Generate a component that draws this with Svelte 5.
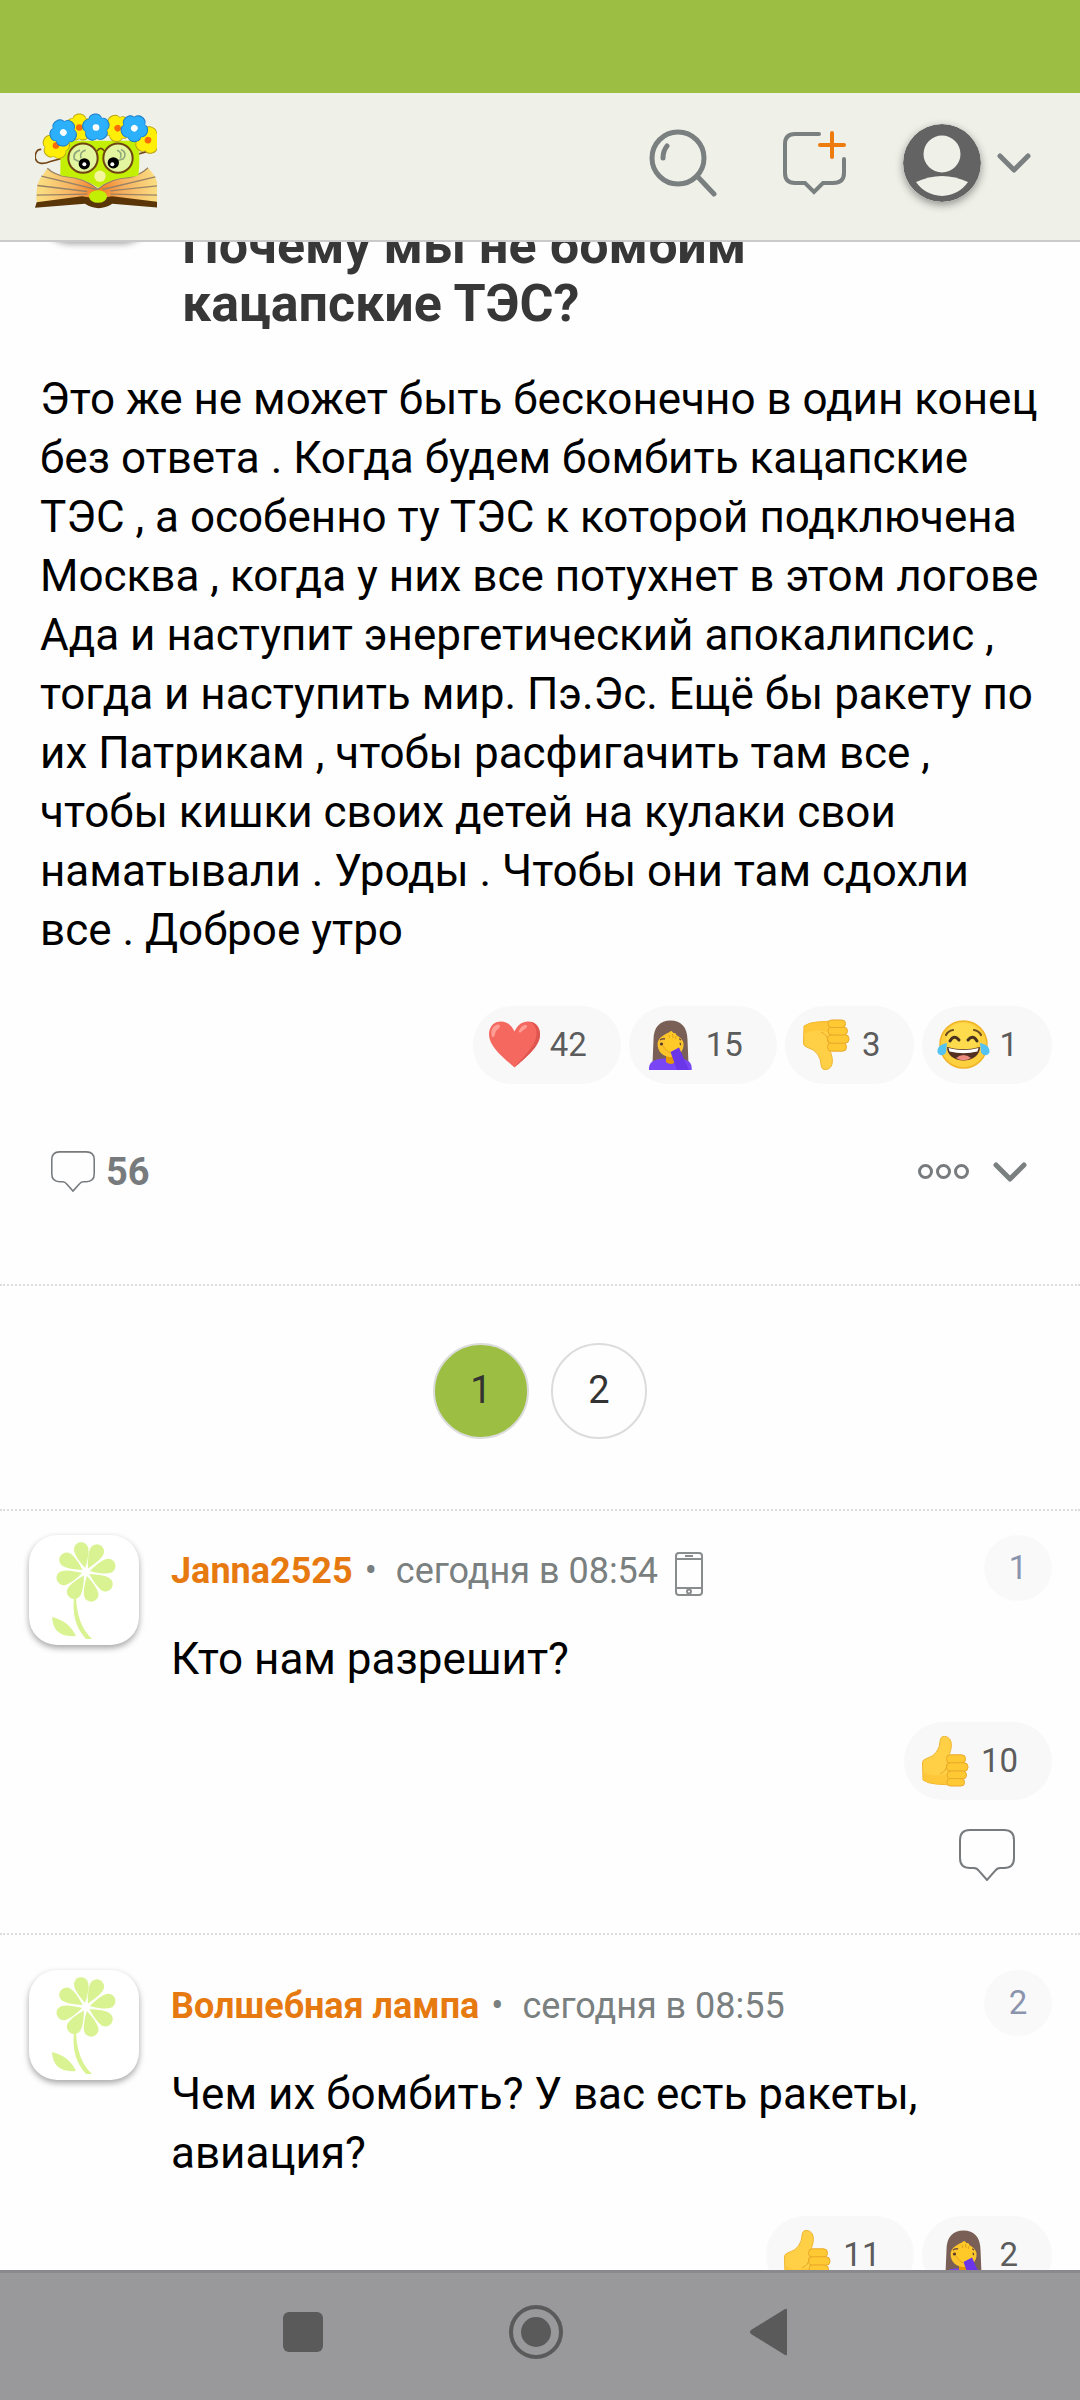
<script>
    const post = {
        title: 'Почему мы не бомбим кацапские ТЭС?',
        text: 'Это же не может быть бесконечно в один конец без ответа . Когда будем бомбить кацапские ТЭС , а особенно ту ТЭС к которой подключена Москва , когда у них все потухнет в этом логове Ада и наступит энергетический апокалипсис , тогда и наступить мир. Пэ.Эс. Ещё бы ракету по их Патрикам , чтобы расфигачить там все , чтобы кишки своих детей на кулаки свои наматывали . Уроды . Чтобы они там сдохли все . Доброе утро',
        comments: 56,
        reactions: [['heart', 42], ['facepalm', 15], ['down', 3], ['joy', 1]]
    };

    const comments = [
        { user: 'Janna2525', date: 'сегодня в 08:54', mobile: true, text: 'Кто нам разрешит?', reactions: [['up', 10]] },
        { user: 'Волшебная лампа', date: 'сегодня в 08:55', mobile: false, text: 'Чем их бомбить? У вас есть ракеты, авиация?', reactions: [['up', 11], ['facepalm', 2]] }
    ];

    let page = $state(1);

    const petals = [348, 28, 75, 122, 167, 211, 255, 302];

    // x, y, rotation, colour of every flower in the logo wreath
    const wreath = [
        [108, 138, 10, 'yellow'],
        [178, 84, 0, 'yellow'],
        [384, 122, 15, 'yellow'],
        [130, 99, 40, 'blue'],
        [293, 86, -25, 'yellow'],
        [228, 84, -5, 'blue'],
        [343, 86, 35, 'blue']
    ];
</script>

{#snippet emoji(name)}
    <svg class="emoji" viewBox="0 0 55 55" aria-hidden="true">
        {#if name == 'heart'}
            <path d="M27.500 49.500C18 41 2 29 2 16.500C2 8 7.500 3.500 14 3.500c6 0 10.500 3.500 13.500 10C30.500 7 35 3.500 41 3.500c6.500 0 12 4.500 12 13C53 29 37 41 27.500 49.500z" fill="#f4685f" />
            <path d="M43 3.700c5.800.8 10 5.400 10 12.800C53 29 37 41 27.500 49.500C36 39 49.500 28 49.500 15c0-5-2.300-9-6.500-11.300z" fill="#df5650" />
            <path d="M4.500 17c-1-5 2-10 6.500-10.500c3 0 2.500 3-.5 5c-3 2-2 7-4 7.500c-1 .2-1.700-.7-2-2zM32 13c1-3 4-6.500 7-6c2 .6 1 3-1.500 4.200c-2 1-3 3.300-4.500 3.300c-1 0-1.300-.6-1-1.500z" fill="#ff9d94" />
        {:else if name == 'facepalm'}
            <path d="M27.500 2.500C17 2.500 10.500 9 10.500 22L9.500 46h36l-1-24C44.500 9 38 2.500 27.500 2.500z" fill="#795f55" />
            <path d="M6 52v-2c0-6 6-9 14-9.500h16c8 .5 12.700 3.500 12.700 9.500v2z" fill="#7a46f5" />
            <path d="M23 36h9v8c-2 2.500-6 2.500-9 0z" fill="#e59600" />
            <path d="M28 13c-6 4-12 5-13.400 12C14 34 21 39 27.500 39S41.500 34 40.500 25C39 19 34 18 28 13z" fill="#fcc42c" />
            <path d="M17 22q2.500-2 5-1M33 21q3-1 5 1" stroke="#6d4c41" stroke-width="1.500" fill="none" />
            <circle cx="18.500" cy="26" r="1.600" fill="#543930" /><circle cx="36.500" cy="26" r="1.600" fill="#543930" />
            <path d="M22 24l2-7q1-2 2 0l1-3q1.500-1.500 2.500 0l.5 2q2-2 3 0l.5 3q2-1 2.500 1l1 8-5 6-7 1-4-5z" fill="#ffca28" />
            <path d="M26 17l.5 3M29.500 16l.5 4M33 18l-.5 3M20 28q3 5 7 7" stroke="#e3a11a" stroke-width="1" fill="none" />
            <path d="M27.500 34l8.500-4.500L46 52H34z" fill="#6b35e8" />
        {:else if name == 'joy'}
            <circle cx="27.500" cy="26.500" r="23.500" fill="#fcd03f" stroke="#f0b429" stroke-width="1.500" />
            <ellipse cx="27" cy="19" rx="17" ry="14" fill="#ffe052" opacity=".7" />
            <path d="M10 17q2-4 7-5M38 12q5 1 7 5" stroke="#6b4b20" stroke-width="2.200" fill="none" stroke-linecap="round" />
            <path d="M14 23q4-7 9-1M32 22q5-6 9 1" stroke="#49321d" stroke-width="3" fill="none" stroke-linecap="round" />
            <path d="M11 29q16.500 4.500 33 0C44 37 37 42.500 27.500 42.500S11 37 11 29z" fill="#533021" />
            <path d="M12.500 30q15 4 30 0l-1 3.500q-14 3.500-28 0z" fill="#fff" />
            <path d="M20 40q7.500-6 15 0q-7.500 4.500-15 0z" fill="#ef8a80" />
            <path d="M11 25C5 26 1 29 1.500 34c.5 4 7 4.500 8.500 0zM44 25c6 1 10 4 9.500 9c-.5 4-7 4.500-8.500 0z" fill="#55c3f2" />
        {:else}
            <g transform={name == 'down' ? 'matrix(1 0 0 -1 0 54)' : null}>
                <path d="M4.500 29q0-3 3-4q8-2.500 11-7q3.500-5 3.800-12c.2-5 7.700-4.500 10 0c2.200 4.500.7 10-1.300 15.500L33 51l-15-1q-8-.5-13-4z" fill="#ffd046" stroke="#eeb52f" stroke-width="1" />
                <path d="M5 38q10 6 24 2l2 11-13-1q-8-.5-13-4z" fill="#fcc130" opacity=".6" />
                <g fill="#ffc933" stroke="#e9a92a" stroke-width="1">
                    <rect x="28.500" y="20.800" width="19" height="8.500" rx="4" />
                    <rect x="28.500" y="28.800" width="21.500" height="8.500" rx="4" />
                    <rect x="29" y="37" width="19.500" height="8" rx="4" />
                    <rect x="29" y="44.500" width="17.500" height="7.500" rx="3.500" />
                </g>
                <path d="M29 30q0 7-7 10" stroke="#e9a92a" stroke-width="1" fill="none" />
            </g>
        {/if}
    </svg>
{/snippet}

{#snippet reactionList(items)}
    <div class="reactions">
        {#each items as [name, count]}
            <button class="reaction">{@render emoji(name)}<span>{count}</span></button>
        {/each}
    </div>
{/snippet}

{#snippet bubble()}
    <svg class="bubble" viewBox="0 0 56 52" aria-hidden="true">
        <path d="M11 1h34q10 0 10 10v18q0 10-10 10h-4q-3 0-5 3l-8 9-8-9q-2-3-5-3h-4Q1 39 1 29V11Q1 1 11 1z" />
    </svg>
{/snippet}

{#snippet chevron()}
    <svg class="chevron" viewBox="0 0 34 20" aria-hidden="true"><path d="M3 3l14 14L31 3" /></svg>
{/snippet}

<div class="screen">
    <div class="status"></div>

    <header>
        <a class="logo" href="#home" aria-label="Главная">
            <svg viewBox="45 38 366 290" aria-hidden="true">
                <defs>
                    <radialGradient id="pages" gradientUnits="userSpaceOnUse" cx="235" cy="268" r="170">
                        <stop offset="0" stop-color="#f47a1c" />
                        <stop offset=".45" stop-color="#f6b160" />
                        <stop offset="1" stop-color="#fadb80" />
                    </radialGradient>
                </defs>
                <path d="M64 150c-14-2-20 14-18 26c5 20 25 18 45 10L142 172M340 168l48-14" fill="none" stroke="#74471a" stroke-width="5" />
                <path d="M82 206q22 21 58 25q50 3 94 38q40-34 92-35q35-7 58-29q30 33 27 50v55l-135-6q-42 14-88 0L50 308q-4-60 16-78z" fill="url(#pages)" />
                <path d="M82 206q22 21 58 25q50 3 94 38q40-34 92-35q35-7 58-29M64 230l166 40M52 258l150 18M50 287l152-3M406 232l-158 38M411 259l-140 15M411 287l-140-3" fill="none" stroke="#988367" stroke-width="4" />
                <path d="M122 124L355 124q6 60 0 104q-12 4-30 5q-52 2-90 32q-42-30-94-34q-12-1-20-4z" fill="#c3ef05" />
                <path d="M50 308l136-18q46 9 90 0l135 17v17l-134-11q-41 26-82 0l-150 12z" fill="#593508" />
                <ellipse cx="234" cy="291" rx="27" ry="19" fill="#c3ef05" />
                <circle cx="189" cy="176" r="44" fill="#e4f5a0" stroke="#6d4412" stroke-width="6" />
                <circle cx="294" cy="176" r="44" fill="#e4f5a0" stroke="#6d4412" stroke-width="6" />
                <path d="M231 155q11-17 22 0" fill="none" stroke="#6d4412" stroke-width="5" />
                <path d="M180 152q-22 6-17 27l14 7M197 152q-20 6-14 24M303 150q20 10 7 28l-16 5M291 152q17 6 10 24" fill="none" stroke="#91a77c" stroke-width="5" />
                <circle cx="193" cy="193" r="17" /><circle cx="193" cy="194" r="6" fill="#fff" />
                <circle cx="280" cy="190" r="17" /><circle cx="277" cy="194" r="6" fill="#fff" />
                <circle cx="240" cy="230" r="17" fill="#f5f69c" />
                {#each wreath as [x, y, angle, color]}
                    <g class={color} transform="translate({x} {y}) rotate({angle})">
                        {#each [0, 72, 144, 216, 288] as turn}
                            <path class="under" transform="rotate({turn})" d="M0 4C-30-14-24-42 0-42S30-14 0 4z" />
                        {/each}
                        {#each [0, 72, 144, 216, 288] as turn}
                            <path class="petal" transform="rotate({turn})" d="M0 4C-29-13-22-39 0-39S29-13 0 4z" />
                        {/each}
                        <circle class="center" r="10" />
                    </g>
                {/each}
            </svg>
        </a>
        <nav class="tools">
            <button class="search" aria-label="Поиск">
                <svg viewBox="0 0 68 68" aria-hidden="true">
                    <circle cx="29" cy="29" r="26" />
                    <path d="M48 47l17 18M18 17q-4 5-4 12" />
                </svg>
            </button>
            <button class="new-topic" aria-label="Новая тема">
                <svg viewBox="0 0 64 64" aria-hidden="true">
                    <path d="M36 3H12Q2 3 2 13v29q0 10 10 10h10l9 9 9-9h10q11 0 11-10V28" />
                    <path class="plus" d="M49 2v24M37 14h24" />
                </svg>
            </button>
            <button class="account" aria-label="Профиль">
                <svg class="user" viewBox="0 0 78 78" aria-hidden="true">
                    <circle cx="39" cy="39" r="39" fill="#636363" />
                    <circle cx="39" cy="30" r="18.500" fill="#eff1e9" />
                    <path d="M13 58q26-12 52 0q-9 13-26 14q-17-1-26-14z" fill="#eff1e9" />
                </svg>
                {@render chevron()}
            </button>
        </nav>
    </header>

    <main>
        <article class="post">
            <div class="post-head">
                <div class="avatar"></div>
                <h1>{post.title}</h1>
            </div>
            <p class="text post-text">{post.text}</p>
            {@render reactionList(post.reactions)}
            <footer>
                <a class="count" href="#comments">{@render bubble()}{post.comments}</a>
                <button class="more" aria-label="Ещё">
                    <svg class="dots" viewBox="0 0 51 15" aria-hidden="true">
                        <circle cx="7.500" cy="7.500" r="6" /><circle cx="25.500" cy="7.500" r="6" /><circle cx="43.500" cy="7.500" r="6" />
                    </svg>
                    {@render chevron()}
                </button>
            </footer>
        </article>

        <nav class="pager">
            {#each [1, 2] as n}
                <button class:active={page == n} onclick={() => page = n}>{n}</button>
            {/each}
        </nav>

        <section id="comments">
            {#each comments as comment, i}
                <article class="comment">
                    <div class="avatar">
                        <svg viewBox="0 0 110 110" aria-hidden="true">
                            {#each petals as angle}
                                <path transform="translate(57 37) rotate({angle})" d="M0-4Q-7-16-7.300-23A7.300 7.300 0 0 1 7.300-23Q7-16 0-4z" />
                            {/each}
                            <path d="M45 62q-3 26 12 42h6Q48 90 47 62zM23 82q1 21 24 19q-7-15-24-19z" />
                        </svg>
                    </div>
                    <div class="content">
                        <div class="top">
                            <div class="meta">
                                <a href="#user">{comment.user}</a>
                                <span class="bullet">•</span>
                                <time>{comment.date}</time>
                                {#if comment.mobile}
                                    <svg class="phone" viewBox="0 0 28 44" aria-hidden="true">
                                        <rect x="1" y="1" width="26" height="42" rx="3" />
                                        <path d="M1 7h26M1 36h26M10 4h8" />
                                        <circle cx="14" cy="39.500" r="2" />
                                    </svg>
                                {/if}
                            </div>
                            <span class="number">{i + 1}</span>
                        </div>
                        <p class="text">{comment.text}</p>
                        {@render reactionList(comment.reactions)}
                        <button class="reply" aria-label="Ответить">{@render bubble()}</button>
                    </div>
                </article>
            {/each}
        </section>
    </main>

    <nav class="system">
        <button aria-label="Недавние"><svg viewBox="0 0 54 54"><rect x="7" y="7" width="40" height="40" rx="6" /></svg></button>
        <button aria-label="Домой"><svg viewBox="0 0 54 54"><circle class="ring" cx="27" cy="27" r="25" /><circle cx="27" cy="27" r="15" /></svg></button>
        <button aria-label="Назад"><svg viewBox="0 0 54 54"><path d="M9 25L43 4q2-1 2 1v44q0 2-2 1L9 29q-2-2 0-4z" /></svg></button>
    </nav>
</div>

<style>
    :global(body) {
        margin: 0;
        background: #fefefe;
    }

    .screen {
        display: flex;
        flex-direction: column;
        height: 100vh;
        overflow: hidden;
        font-family: Roboto, "Liberation Sans", sans-serif;
        color: #000;
    }

    button {
        padding: 0;
        border: none;
        background: none;
        font: inherit;
        color: inherit;
    }

    a {
        text-decoration: none;
    }

    svg {
        display: block;
    }

    .status {
        flex: none;
        height: 93px;
        background: #9cbf43;
    }

    header {
        flex: none;
        display: flex;
        align-items: center;
        justify-content: space-between;
        height: 147px;
        padding: 0 49px 0 35px;
        background: #eff1e9;
        border-bottom: 2px solid #c9cbca;
    }

    .logo svg {
        width: 122px;
        height: 97px;
        margin-bottom: 12px;
    }

    .yellow .under { fill: #b8a313; }
    .yellow .petal { fill: #ffee08; }
    .yellow .center { fill: #f96a08; }
    .blue .under { fill: #1d79c4; }
    .blue .petal { fill: #2cb0fc; }
    .blue .center { fill: #fff; }

    .tools {
        display: flex;
        align-items: center;
        padding-bottom: 8px;
    }

    .search svg, .new-topic svg {
        fill: none;
        stroke: #7a7f80;
        stroke-width: 5;
        stroke-linecap: round;
    }

    .search svg {
        width: 68px;
        height: 68px;
    }

    .new-topic svg {
        width: 64px;
        height: 64px;
        margin: 0 56px 0 66px;
        stroke-width: 4;
    }

    .new-topic .plus {
        stroke: #ee7b0d;
    }

    .account {
        display: flex;
        align-items: center;
        gap: 16px;
    }

    .user {
        width: 78px;
        height: 78px;
        border-radius: 50%;
        box-shadow: 0 3px 8px rgba(0, 0, 0, 0.4);
    }

    .chevron {
        width: 34px;
        height: 20px;
        fill: none;
        stroke: #7a7f80;
        stroke-width: 5;
        stroke-linecap: round;
        stroke-linejoin: round;
    }

    main {
        flex: 1;
        min-height: 0;
        overflow: hidden;
    }

    .post {
        /* scrolled under the header */
        margin-top: -111px;
        padding-bottom: 92px;
        border-bottom: 2px dotted #ddd;
    }

    .post-head {
        display: flex;
        gap: 31px;
        padding: 0 41px;
    }

    .avatar {
        flex: none;
        width: 110px;
        height: 110px;
        border-radius: 28px;
        background: #fff;
        box-shadow: 0 3px 6px rgba(0, 0, 0, 0.35);
    }

    .avatar path {
        fill: #d9f392;
    }

    h1 {
        margin: 0;
        padding-top: 86px;
        max-width: 600px;
        font-size: 52px;
        line-height: 58px;
        font-weight: 700;
        color: #373737;
    }

    .text {
        margin: 29px 0 33px;
        font-size: 44px;
        line-height: 59px;
    }

    .post-text {
        margin: 37px 40px 46px;
    }

    .reactions {
        display: flex;
        justify-content: flex-end;
        gap: 8px;
    }

    .post .reactions {
        padding-right: 28px;
    }

    .reaction {
        display: flex;
        align-items: center;
        gap: 8px;
        height: 78px;
        padding: 0 34px 0 14px;
        border-radius: 39px;
        background: #f8f8f8;
        font-size: 33px;
        line-height: 40px;
        color: #5c5c5c;
    }

    .emoji {
        width: 55px;
        height: 55px;
    }

    footer {
        display: flex;
        align-items: center;
        justify-content: space-between;
        margin-top: 67px;
        padding: 0 53px 0 51px;
    }

    .bubble {
        width: 56px;
        height: 52px;
        fill: none;
        stroke: #777b7d;
        stroke-width: 2;
    }

    .count {
        display: flex;
        align-items: center;
        gap: 11px;
        height: 41px;
        font-size: 38px;
        font-weight: 700;
        color: #777b7d;
    }

    .count .bubble {
        width: 44px;
        height: 41px;
    }

    .more {
        display: flex;
        align-items: center;
        gap: 24px;
    }

    .dots {
        width: 51px;
        height: 15px;
        fill: none;
        stroke: #777b7d;
        stroke-width: 3;
    }

    .pager {
        display: flex;
        justify-content: center;
        gap: 22px;
        padding: 57px 0 70px;
        border-bottom: 2px dotted #ddd;
    }

    .pager button {
        width: 96px;
        height: 96px;
        padding-bottom: 2px;
        border: 2px solid #dcdcdc;
        border-radius: 50%;
        font-size: 38px;
        color: #333;
    }

    .pager .active {
        background: #9cbf43;
    }

    .comment {
        display: flex;
        gap: 32px;
        padding: 35px 28px 52px 29px;
        border-bottom: 2px dotted #ddd;
    }

    .comment:first-child {
        padding-top: 24px;
    }

    .content {
        flex: 1;
    }

    .top {
        display: flex;
        justify-content: space-between;
    }

    .meta {
        display: flex;
        height: 46px;
        padding-top: 15px;
        font-size: 36px;
        line-height: 42px;
        color: #7a7f80;
    }

    .meta a {
        font-weight: 700;
        color: #e67a10;
    }

    .bullet {
        margin: 0 19px 0 12px;
    }

    .phone {
        align-self: flex-end;
        width: 28px;
        height: 44px;
        margin-left: 17px;
        fill: none;
        stroke: #8a8d8e;
        stroke-width: 2;
    }

    .number {
        width: 68px;
        height: 66px;
        border-radius: 50%;
        background: #f9f9f9;
        font-size: 33px;
        line-height: 65px;
        text-align: center;
        color: #8b94ad;
    }

    .reply {
        display: block;
        margin: 29px 37px 0 auto;
    }

    .system {
        flex: none;
        display: flex;
        justify-content: center;
        padding: 32px 8px 41px 0;
        background: #99999b;
        border-top: 3px solid #8a8a8e;
    }

    .system button {
        display: flex;
        justify-content: center;
        width: 233px;
    }

    .system svg {
        width: 54px;
        height: 54px;
        fill: #5a5a5a;
    }

    .system .ring {
        fill: none;
        stroke: #5a5a5a;
        stroke-width: 4;
    }
</style>
